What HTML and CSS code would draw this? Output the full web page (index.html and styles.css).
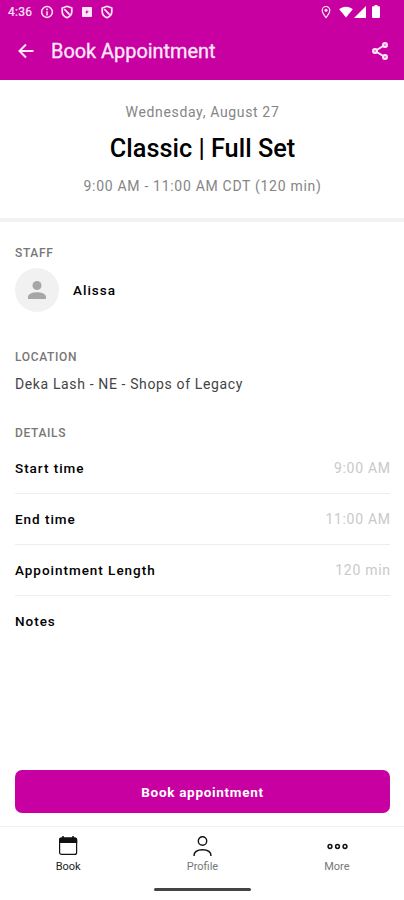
FILE: index.html
```html
<!DOCTYPE html>
<html lang="en">
<head>
<meta charset="utf-8">
<title>Book Appointment</title>
<link rel="stylesheet" href="styles.css">
</head>
<body>
<div class="screen">
  <header class="top">
    <div class="status">
      <span class="clock">4:36</span>
      <svg class="s-icon" viewBox="0 0 14 14"><circle cx="7" cy="7" r="5.400" fill="none" stroke="currentColor" stroke-width="1.500"/><path d="M7 3.600v1.600M7 6.200v4.200" stroke="currentColor" stroke-width="1.500"/></svg>
      <svg class="s-icon" viewBox="0 0 14 14"><path d="M7 1.300 11.800 3v3.800c0 2.700-2.100 4.800-4.800 5.900-2.700-1.100-4.800-3.200-4.800-5.900V3zM4.200 4l5.400 5.600" fill="none" stroke="currentColor" stroke-width="1.700"/></svg>
      <svg class="s-icon" viewBox="0 0 14 14"><path fill="currentColor" fill-rule="evenodd" d="M2.900 2h8.200a.9.9 0 0 1 .9.9v8.200a.9.9 0 0 1-.9.9H2.900a.9.9 0 0 1-.9-.9V2.900A.9.9 0 0 1 2.900 2zM7.300 4.700 5.200 7.400h1.300L6 9.300l2.800-3H7.200z"/></svg>
      <svg class="s-icon" viewBox="0 0 14 14"><path d="M7 1.300 11.800 3v3.800c0 2.700-2.100 4.800-4.800 5.900-2.700-1.100-4.800-3.200-4.800-5.900V3zM4.200 4l5.400 5.600" fill="none" stroke="currentColor" stroke-width="1.700"/></svg>
      <span class="spacer"></span>
      <svg class="pin" viewBox="0 0 10 14"><path d="M5 12.600C3 10.200 1.200 7.800 1.200 5.300a3.800 3.800 0 0 1 7.600 0C8.800 7.800 7 10.200 5 12.600z" fill="none" stroke="currentColor" stroke-width="1.200"/><circle cx="5" cy="5.200" r="1.500" fill="currentColor"/></svg>
      <svg class="wifi" viewBox="0 0 14 12"><path fill="currentColor" d="M7 11.500.2 3.200C2 1.600 4.400.7 7 .7s5 .9 6.800 2.500z"/></svg>
      <svg class="signal" viewBox="0 0 12 12"><path fill="currentColor" d="M12 0v12H0z"/></svg>
      <svg class="battery" viewBox="0 0 8 13"><path fill="currentColor" d="M2.500 0h3v1.300H7a1 1 0 0 1 1 1V12a1 1 0 0 1-1 1H1a1 1 0 0 1-1-1V2.300a1 1 0 0 1 1-1h1.500z"/></svg>
    </div>
    <div class="bar">
      <svg class="back" viewBox="0 0 16 16"><path d="M15.500 8H2M8 1.500 1.500 8 8 14.500" fill="none" stroke="currentColor" stroke-width="2"/></svg>
      <h1>Book Appointment</h1>
      <svg class="share" viewBox="0 0 18 20"><path d="M14 4 4 10l10 6" fill="none" stroke="currentColor" stroke-width="2"/><g fill="#c800a1" stroke="currentColor" stroke-width="2.200"><circle cx="14" cy="4" r="1.900"/><circle cx="4" cy="10" r="1.900"/><circle cx="14" cy="16" r="1.900"/></g></svg>
    </div>
  </header>
  <section class="summary">
    <p class="date">Wednesday, August 27</p>
    <h2>Classic | Full Set</h2>
    <p class="time">9:00 AM - 11:00 AM CDT (120 min)</p>
  </section>
  <main>
    <h3>STAFF</h3>
    <div class="staff">
      <span class="avatar"><svg viewBox="0 0 18 18"><circle cx="9" cy="4.500" r="4.500"/><path d="M0 18v-2.200C0 12.600 5.500 11.200 9 11.200s9 1.400 9 4.600V18z"/></svg></span>
      <strong>Alissa</strong>
    </div>
    <h3>LOCATION</h3>
    <p class="location">Deka Lash - NE - Shops of Legacy</p>
    <h3>DETAILS</h3>
    <dl>
      <div class="row"><dt>Start time</dt><dd>9:00 AM</dd></div>
      <div class="row"><dt>End time</dt><dd>11:00 AM</dd></div>
      <div class="row"><dt>Appointment Length</dt><dd>120 min</dd></div>
      <div class="row"><dt>Notes</dt></div>
    </dl>
  </main>
  <button class="cta">Book appointment</button>
  <nav>
    <a class="tab active"><svg viewBox="0 0 22 22"><rect x="2.600" y="3.200" width="17" height="16.200" rx="2" fill="none" stroke="currentColor" stroke-width="1.200"/><path d="M2 8V4.500A2 2 0 0 1 4 2.500h14.200a2 2 0 0 1 2 2V8z" fill="currentColor"/><path d="M6 1v3M16 1v3" stroke="currentColor" stroke-width="1.500"/></svg><span>Book</span></a>
    <a class="tab"><svg viewBox="0 0 22 22"><g fill="none" stroke="currentColor" stroke-width="1.400"><circle cx="11.500" cy="6" r="4.200"/><path d="M3 21c0-4 3.500-6.200 8.500-6.200S20 17 20 21"/></g></svg><span>Profile</span></a>
    <a class="tab"><svg viewBox="0 0 22 22"><g fill="none" stroke="currentColor" stroke-width="1.500"><circle cx="4" cy="11.500" r="1.900"/><circle cx="11.500" cy="11.500" r="1.900"/><circle cx="19" cy="11.500" r="1.900"/></g></svg><span>More</span></a>
  </nav>
  <div class="home"></div>
</div>
</body>
</html>
```
FILE: styles.css
```css
* { box-sizing: border-box; margin: 0; padding: 0; }
body { font-family: Roboto, "Liberation Sans", sans-serif; background: #fff; color: #111; }
svg { display: block; flex: none; }
.screen { width: 404px; height: 900px; display: flex; flex-direction: column; overflow: hidden; }
.top { height: 80px; background: #c800a1; color: #ffe8fb; flex: none; }
.status { height: 23px; display: flex; align-items: center; padding: 0 23px 0 8px; }
.clock { width: 32px; font-size: 12px; font-weight: 400; letter-spacing: .3px; line-height: 23px; padding-top: 1px; -webkit-text-stroke: .2px; }
.s-icon { width: 14px; height: 14px; margin-right: 6px; }
.spacer { flex: 1; }
.pin { width: 10px; height: 14px; margin-right: 8px; }
.wifi { width: 14px; height: 12px; color: #fff; }
.signal { width: 12px; height: 12px; color: #fff; margin-left: 1px; margin-right: 6px; }
.battery { width: 8px; height: 13px; color: #fff; margin-right: 1px; }
.bar { height: 56px; display: flex; align-items: center; padding: 0 15px 0 18px; }
.back { width: 16px; height: 16px; }
h1 { flex: 1; margin-left: 17px; padding-top: 2px; font-size: 19.900px; font-weight: 400; line-height: 28px; -webkit-text-stroke: .3px; }
.share { width: 18px; height: 20px; }
.summary { height: 142px; padding: 22px 0 0 1px; border-bottom: 4px solid #f2f2f2; text-align: center; flex: none; }
.date, .time { color: #858585; font-size: 14px; line-height: 20px; letter-spacing: .65px; }
.time { letter-spacing: .7px; }
h2 { font-size: 25.300px; font-weight: 500; line-height: 32px; margin: 11px 0; color: #000; }
main { height: 548px; padding: 23px 14px 0 15px; flex: none; }
h3 { font-size: 12px; font-weight: 500; line-height: 16px; color: #777; letter-spacing: .65px; }
.staff { display: flex; align-items: center; gap: 14px; height: 44px; margin: 7px 0 37px; }
.staff strong { font-size: 13.500px; font-weight: 500; letter-spacing: 1px; color: #000; }
.avatar { width: 44px; height: 44px; border-radius: 50%; background: #f1f1f1; display: grid; place-items: center; }
.avatar svg { width: 18px; height: 18px; fill: #a6a6a6; }
.location { font-size: 14px; line-height: 20px; letter-spacing: .63px; color: #444; margin: 9px 0 31px; }
dl { margin-top: 2px; }
.row { height: 51px; padding-bottom: 1px; display: flex; justify-content: space-between; align-items: center; border-bottom: 1px solid #eee; }
.row:last-child { border: 0; }
dt { font-size: 13.500px; font-weight: 500; letter-spacing: .97px; color: #000; }
dd { font-size: 14px; letter-spacing: .7px; color: #c9c9c9; margin-right: -.7px; }
.cta { flex: none; height: 43px; padding-top: 1px; margin: 0 14px 0 15px; border: 0; border-radius: 7px; background: #c800a1; color: #fff; font: 700 13.500px Roboto, sans-serif; letter-spacing: .7px; }
nav { flex: none; height: 55px; margin-top: 13px; padding-left: 1px; border-top: 1px solid #f2f2f2; display: grid; grid-template-columns: repeat(3, 1fr); color: #111; }
.tab { display: flex; flex-direction: column; align-items: center; padding-top: 8px; }
.tab svg { width: 22px; height: 22px; }
.tab span { font-size: 11px; line-height: 14px; margin-top: 3px; color: #777; }
.tab.active span { color: #222; }
.home { width: 97px; height: 3px; margin: 7px auto 0; border-radius: 2px; background: #444; }
```
